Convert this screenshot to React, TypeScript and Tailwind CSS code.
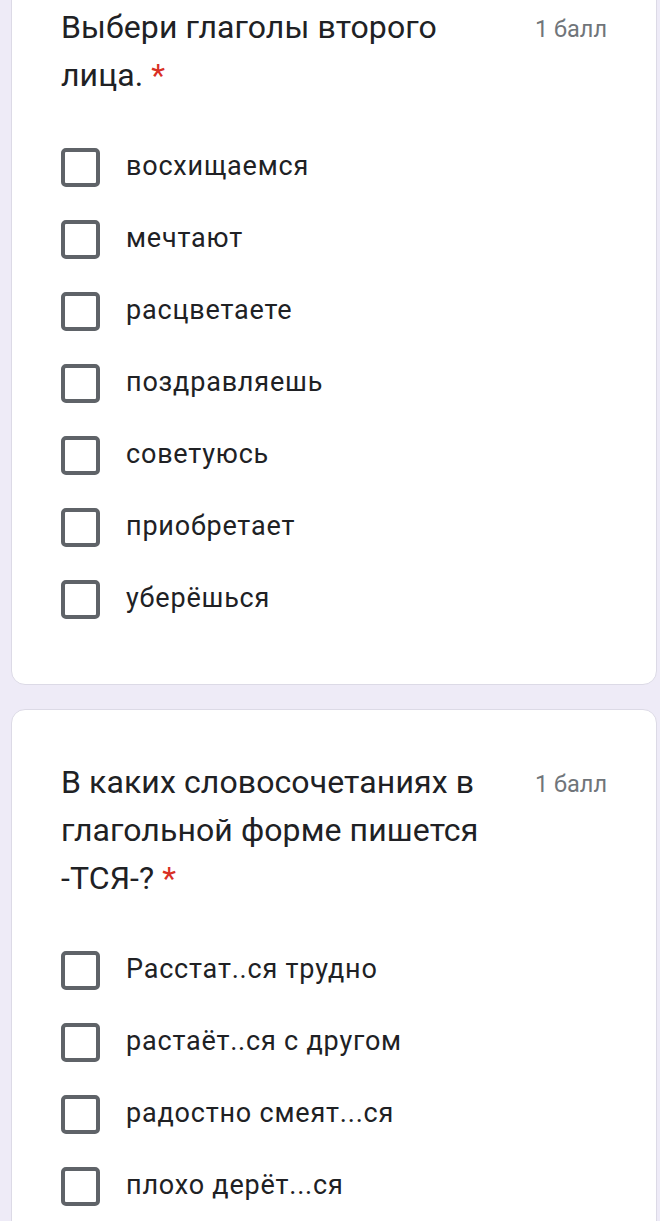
import React from "react";

type Question = {
  title: string;
  points: string;
  options: string[];
};

const questions: Question[] = [
  {
    title: "Выбери глаголы второго лица.",
    points: "1 балл",
    options: [
      "восхищаемся",
      "мечтают",
      "расцветаете",
      "поздравляешь",
      "советуюсь",
      "приобретает",
      "уберёшься",
    ],
  },
  {
    title: "В каких словосочетаниях в глагольной форме пишется -ТСЯ-?",
    points: "1 балл",
    options: [
      "Расстат..ся трудно",
      "растаёт..ся с другом",
      "радостно смеят...ся",
      "плохо дерёт...ся",
    ],
  },
];

function Checkbox() {
  return (
    <span className="block w-[39px] h-[39px] shrink-0 rounded-[5px] border-[4px] border-[#5f6368] bg-white" />
  );
}

function QuestionCard({ q }: { q: Question }) {
  return (
    <div className="bg-white border border-[#dcdae6] rounded-[14px] pl-[49px] pr-[49px] pt-[48px] pb-[49px]">
      <div className="flex items-start gap-8">
        <div className="flex-1 min-w-0 text-[32px] leading-[48px] text-[#202124] tracking-[0.1px]">
          {q.title} <span className="text-[#d93025]">*</span>
        </div>
        <div className="shrink-0 text-[23.5px] leading-[48px] text-[#70757a] mt-[2px]">
          {q.points}
        </div>
      </div>
      <div className="mt-8 flex flex-col">
        {q.options.map((o) => (
          <label key={o} className="h-[72px] flex items-center gap-[26px]">
            <Checkbox />
            <span className="text-[27px] text-[#202124] tracking-[0.8px] leading-none pb-[2px]">
              {o}
            </span>
          </label>
        ))}
      </div>
    </div>
  );
}

export default function App() {
  return (
    <div
      className="min-h-screen bg-[#eeebf7] pl-[11px] pr-[3px] overflow-hidden"
      style={{ fontFamily: "Roboto, 'Noto Sans', sans-serif" }}
    >
      <div className="-mt-[46px] flex flex-col gap-[24px] pb-6">
        {questions.map((q) => (
          <QuestionCard key={q.title} q={q} />
        ))}
      </div>
    </div>
  );
}
